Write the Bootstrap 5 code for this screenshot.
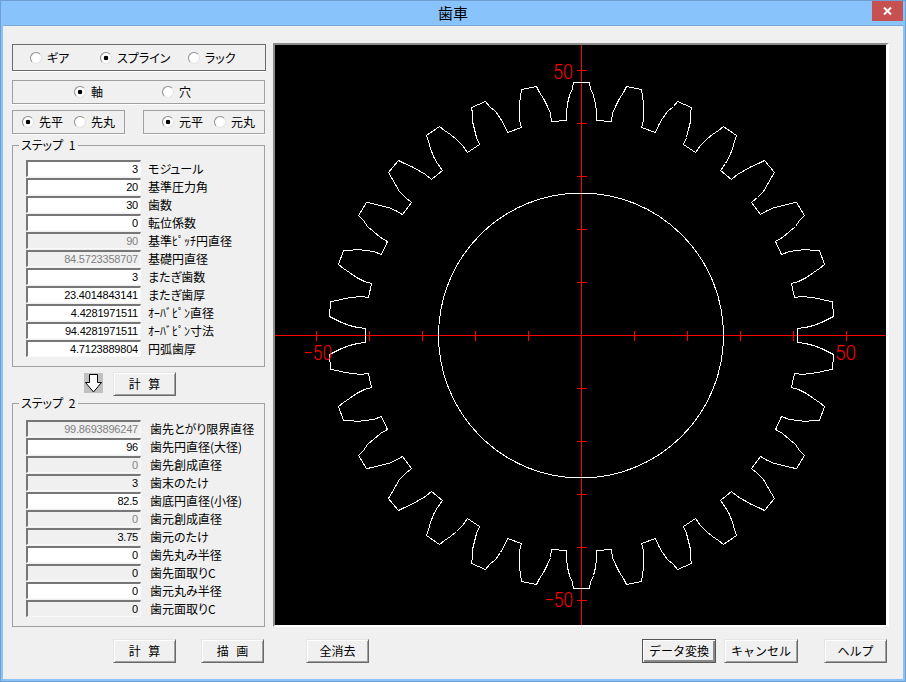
<!DOCTYPE html>
<html lang="ja">
<head>
    <meta charset="UTF-8">
    <meta name="viewport" content="width=device-width, initial-scale=1.0">
    <title>歯車</title>
    <link href="https://cdn.jsdelivr.net/npm/bootstrap@5.3.0/dist/css/bootstrap.min.css" rel="stylesheet">
    <style>
        body { margin: 0; background: #f0f0f0; color: #000; font: 12px/14px "Noto Sans CJK JP", "Liberation Sans", sans-serif; font-feature-settings: "palt"; }
        .win { width: 906px; height: 682px; background: #88c3fb; padding: 0 3px 3px; box-shadow: inset 0 1px #6f9fd2, inset 1px 0 #6f9fd2, inset -1px 0 #6f9fd2, inset 0 -1px #6f9fd2; }
        .title-bar { height: 25px; font-size: 15px; }
        .close-x { position: absolute; top: 1px; right: 0; width: 31px; height: 20px; background: #c75050; }
        .client { height: 654px; background: #f0f0f0; padding: 18px 14px 0 9px; box-shadow: inset 0 1px #78a9db; }
        .left-col { width: 254px; margin-top: 1px; margin-right: 7px; }

        .opt-box { border: 1px solid #a0a0a0; box-shadow: 0 1px #fff; height: 24px; }
        .opt-main { height: 27px; border-color: #6b6b6b; padding-left: 17px; margin-bottom: 9px; width: 254px; }
        .opt-axis { width: 253px; padding-left: 61px; margin-bottom: 6px; }
        .opt-tip { width: 113px; padding-left: 9px; }
        .opt-root { width: 122px; padding-left: 18px; margin-left: 18px; }
        .opt-w52 { width: 52px; }
        .opt-w70 { width: 70px; }
        .opt-w88 { width: 88px; }
        .form-check-input.win-radio { width: 12px; height: 12px; margin: 0 5px 0 0; flex: none; border: 1px solid #e2e2e2; border-top-color: #8c8c8c; border-left-color: #8c8c8c; background: #fff; box-shadow: none; }
        .form-check-input.win-radio:checked { background: radial-gradient(circle, #000 0 2px, #fff 2.6px); }

        .step-box { width: 253px; border: 1px solid #a0a0a0; padding: 8px 0 8px 13px; margin: 4px 0 0; min-width: 0; }
        .step-two { padding-top: 10px; margin-top: 0; }
        .step-box legend { float: none; width: auto; margin: 0 0 0 -7px; padding: 0 2px; font-size: 12px; line-height: 14px; word-spacing: 3px; }
        .val-row { height: 18px; }
        .val-row label { margin: 0 0 0 7px; white-space: nowrap; line-height: 18px; }
        .step-two .val-row label { margin-left: 9px; }
        .form-control.val { width: 115px; height: 17px; flex: none; padding: 0 2px 0 0; text-align: right; color: #000; background: #fff; font: 11px/15px "Liberation Sans", sans-serif; letter-spacing: -0.2px; border-radius: 0; border-style: solid; border-width: 2px 1px 1px 2px; border-color: #777 #f8f8f8 #f8f8f8 #777; box-shadow: none; opacity: 1; }
        .form-control.val:read-only { background: #f0f0f0; }
        .form-control.val:disabled { background: #f0f0f0; color: #808080; }

        .btn.win-btn { width: 63px; height: 24px; padding: 0; font-size: 12px; line-height: 20px; color: #000; background: #f0f0f0; border-radius: 0; border: 1px solid; border-color: #e6e6e6 #696969 #696969 #e6e6e6; box-shadow: inset 1px 1px #fff, inset -1px -1px #a0a0a0; word-spacing: 5px; }
        .btn.win-btn.btn-wide { width: 74px; }
        .btn.win-btn.btn-default { border-color: #555; box-shadow: inset 1px 1px #fff, inset -2px -2px #8a8a8a; }
        .calc-row { height: 24px; margin-top: 5px; padding-left: 72px; }
        .down-arrow { width: 19px; height: 20px; background: #c0c0c0; margin-right: 10px; margin-top: 1px; }

        .canvas-box { width: 616px; height: 584px; border-style: solid; border-width: 2px 3px 2px 2px; border-color: #8c8c8c #fff #fff #8c8c8c; background: #000; }
        .canvas-box svg { display: block; }
        .canvas-box text { font-family: Roboto, "Liberation Sans", sans-serif; font-weight: 300; font-size: 20px; fill: #f00; }

        .bottom-row { margin-top: 12px; padding-left: 101px; }
        .gap-draw { margin-left: 25px; }
        .gap-clear { margin-left: 42px; }
        .gap-convert { margin-left: 273px; }
        .gap-cancel { margin-left: 8px; }
        .gap-help { margin-left: 26px; }
    </style>
</head>

<body>
    <div class="win">
        <div class="title-bar position-relative d-flex align-items-center justify-content-center">
            <span>歯車</span>
            <div class="close-x d-flex align-items-center justify-content-center">
                <svg width="9" height="8" viewBox="0 0 9 8"><path d="M1 0.5 8 7.5M8 0.5 1 7.5" stroke="#fff" stroke-width="2" fill="none"/></svg>
            </div>
        </div>

        <div class="client">
            <div class="d-flex">
                <div class="left-col">
                    <div class="opt-box opt-main d-flex align-items-center">
                        <div class="opt-w70 d-flex align-items-center"><input class="form-check-input win-radio" type="radio" name="kind" id="k1"><label for="k1">ギア</label></div>
                        <div class="opt-w88 d-flex align-items-center"><input class="form-check-input win-radio" type="radio" name="kind" id="k2" checked><label for="k2">スプライン</label></div>
                        <div class="d-flex align-items-center"><input class="form-check-input win-radio" type="radio" name="kind" id="k3"><label for="k3">ラック</label></div>
                    </div>
                    <div class="opt-box opt-axis d-flex align-items-center">
                        <div class="opt-w88 d-flex align-items-center"><input class="form-check-input win-radio" type="radio" name="axis" id="a1" checked><label for="a1">軸</label></div>
                        <div class="d-flex align-items-center"><input class="form-check-input win-radio" type="radio" name="axis" id="a2"><label for="a2">穴</label></div>
                    </div>
                    <div class="d-flex">
                        <div class="opt-box opt-tip d-flex align-items-center">
                            <div class="opt-w52 d-flex align-items-center"><input class="form-check-input win-radio" type="radio" name="tip" id="t1" checked><label for="t1">先平</label></div>
                            <div class="d-flex align-items-center"><input class="form-check-input win-radio" type="radio" name="tip" id="t2"><label for="t2">先丸</label></div>
                        </div>
                        <div class="opt-box opt-root d-flex align-items-center">
                            <div class="opt-w52 d-flex align-items-center"><input class="form-check-input win-radio" type="radio" name="root" id="r1" checked><label for="r1">元平</label></div>
                            <div class="d-flex align-items-center"><input class="form-check-input win-radio" type="radio" name="root" id="r2"><label for="r2">元丸</label></div>
                        </div>
                    </div>

                    <fieldset class="step-box">
                        <legend>ステップ 1</legend>
                        <div class="val-row d-flex"><input class="form-control val" value="3"><label>モジュール</label></div>
                        <div class="val-row d-flex"><input class="form-control val" value="20"><label>基準圧力角</label></div>
                        <div class="val-row d-flex"><input class="form-control val" value="30"><label>歯数</label></div>
                        <div class="val-row d-flex"><input class="form-control val" value="0"><label>転位係数</label></div>
                        <div class="val-row d-flex"><input class="form-control val" value="90" disabled><label>基準ﾋﾟｯﾁ円直径</label></div>
                        <div class="val-row d-flex"><input class="form-control val" value="84.5723358707" disabled><label>基礎円直径</label></div>
                        <div class="val-row d-flex"><input class="form-control val" value="3"><label>またぎ歯数</label></div>
                        <div class="val-row d-flex"><input class="form-control val" value="23.4014843141"><label>またぎ歯厚</label></div>
                        <div class="val-row d-flex"><input class="form-control val" value="4.4281971511"><label>ｵｰﾊﾞﾋﾟﾝ直径</label></div>
                        <div class="val-row d-flex"><input class="form-control val" value="94.4281971511"><label>ｵｰﾊﾞﾋﾟﾝ寸法</label></div>
                        <div class="val-row d-flex"><input class="form-control val" value="4.7123889804"><label>円弧歯厚</label></div>
                    </fieldset>

                    <div class="calc-row d-flex">
                        <div class="down-arrow">
                            <svg width="19" height="20" viewBox="0 0 19 20" class="d-block"><path d="M5.5 1.5h8v8h4l-8 9.5-8-9.5h4z" fill="#fff" stroke="#000"/></svg>
                        </div>
                        <button type="button" class="btn win-btn">計 算</button>
                    </div>

                    <fieldset class="step-box step-two">
                        <legend>ステップ 2</legend>
                        <div class="val-row d-flex"><input class="form-control val" value="99.8693896247" disabled><label>歯先とがり限界直径</label></div>
                        <div class="val-row d-flex"><input class="form-control val" value="96"><label>歯先円直径(大径)</label></div>
                        <div class="val-row d-flex"><input class="form-control val" value="0" disabled><label>歯先創成直径</label></div>
                        <div class="val-row d-flex"><input class="form-control val" value="3" readonly><label>歯末のたけ</label></div>
                        <div class="val-row d-flex"><input class="form-control val" value="82.5"><label>歯底円直径(小径)</label></div>
                        <div class="val-row d-flex"><input class="form-control val" value="0" disabled><label>歯元創成直径</label></div>
                        <div class="val-row d-flex"><input class="form-control val" value="3.75" readonly><label>歯元のたけ</label></div>
                        <div class="val-row d-flex"><input class="form-control val" value="0"><label>歯先丸み半径</label></div>
                        <div class="val-row d-flex"><input class="form-control val" value="0" readonly><label>歯先面取りC</label></div>
                        <div class="val-row d-flex"><input class="form-control val" value="0"><label>歯元丸み半径</label></div>
                        <div class="val-row d-flex"><input class="form-control val" value="0" readonly><label>歯元面取りC</label></div>
                    </fieldset>
                </div>

                <div class="canvas-box">
                    <!-- viewBox is in window pixels so the numbers read off the screenshot go straight in -->
                    <svg id="gear-view" width="611" height="580" viewBox="275 45 611 580" shape-rendering="crispEdges">
                        <text x="553" y="79" textLength="20" lengthAdjust="spacingAndGlyphs">50</text>
                        <text x="303" y="360" textLength="29" lengthAdjust="spacingAndGlyphs">−50</text>
                        <text x="835" y="360" textLength="21" lengthAdjust="spacingAndGlyphs">50</text>
                        <text x="544" y="607" textLength="29" lengthAdjust="spacingAndGlyphs">−50</text>
                    </svg>
                </div>
            </div>

            <div class="bottom-row d-flex">
                <button type="button" class="btn win-btn">計 算</button>
                <button type="button" class="btn win-btn gap-draw">描 画</button>
                <button type="button" class="btn win-btn gap-clear">全消去</button>
                <button type="button" class="btn win-btn btn-wide btn-default gap-convert">データ変換</button>
                <button type="button" class="btn win-btn btn-wide gap-cancel">キャンセル</button>
                <button type="button" class="btn win-btn gap-help">ヘルプ</button>
            </div>
        </div>
    </div>

    <script src="https://cdn.jsdelivr.net/npm/bootstrap@5.3.0/dist/js/bootstrap.bundle.min.js"></script>
    <script>
        const view = document.getElementById('gear-view');
        const cx = 581, cy = 335, tickStep = 52.9;

        function addShape(tag, attrs) {
            const el = document.createElementNS('http://www.w3.org/2000/svg', tag);
            for (const key in attrs) el.setAttribute(key, attrs[key]);
            view.insertBefore(el, view.firstChild);
        }

        // tooth flank as [radius, half angle in degrees], read off the zoomed picture
        const flank = [[216, 4.1], [224, 3.95], [232, 3.5], [240, 2.9], [247, 2.2], [253, 1.75]];
        const points = [];
        function polar(r, deg) {
            const a = deg * Math.PI / 180;
            return Math.round(cx + r * Math.sin(a)) + 0.5 + ',' + (Math.round(cy - r * Math.cos(a)) + 0.5);
        }
        for (let i = 0; i < 30; i++) {
            const c = i * 12;
            for (const [r, d] of flank) points.push(polar(r, c - d));
            for (const [r, d] of [...flank].reverse()) points.push(polar(r, c + d));
        }
        addShape('polygon', { points: points.join(' '), fill: 'none', stroke: '#fff' });
        addShape('circle', { cx: cx, cy: cy + 0.5, r: 142.5, fill: 'none', stroke: '#fff' });

        // axes and ticks every 10 units
        addShape('path', { d: `M275 ${cy + 0.5}H886M${cx + 0.5} 45V625`, stroke: '#f00' });
        for (let k = 1; k <= 5; k++) {
            const d = Math.round(k * tickStep);
            addShape('path', { d: `M${cx - d + 0.5} ${cy - 4}v10M${cx + d + 0.5} ${cy - 4}v10M${cx - 4} ${cy - d + 0.5}h10M${cx - 4} ${cy + d + 0.5}h10`, stroke: '#f00' });
        }
    </script>
</body>
</html>
